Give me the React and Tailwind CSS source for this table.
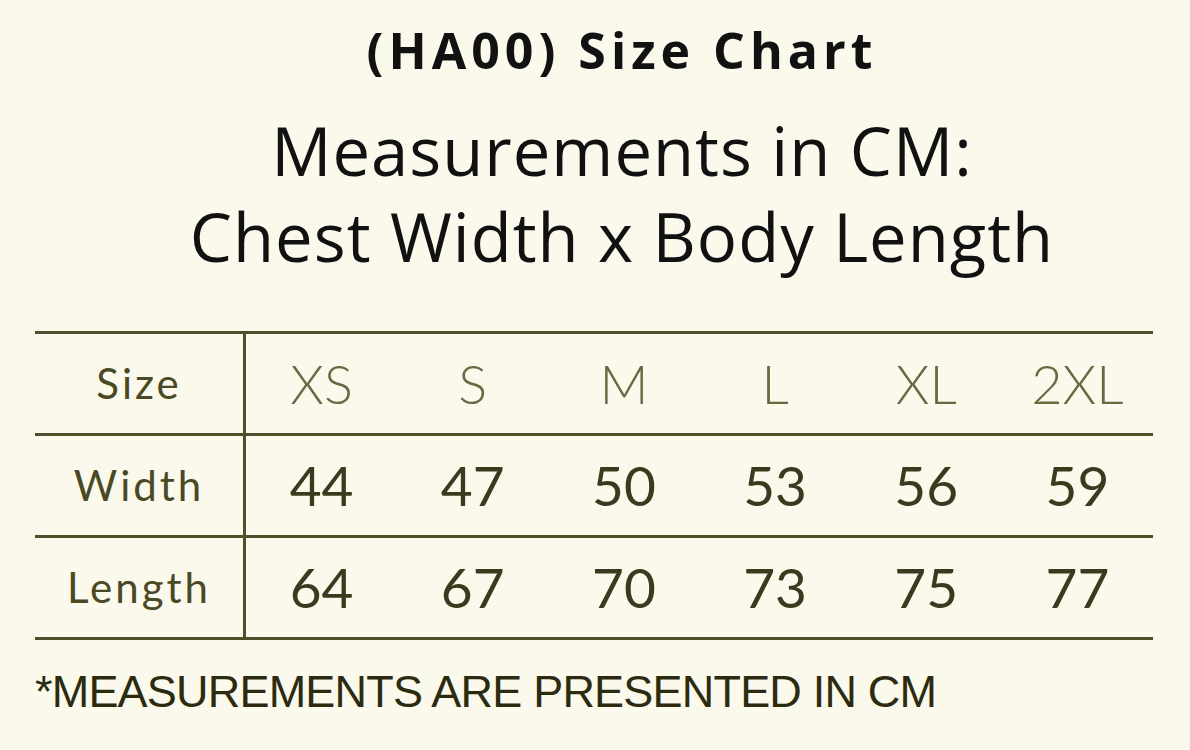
import React from "react";

// Size chart data
const sizes = ["XS", "S", "M", "L", "XL", "2XL"];
const rows = [
  { label: "Width", values: [44, 47, 50, 53, 56, 59] },
  { label: "Length", values: [64, 67, 70, 73, 75, 77] },
];

function Cell({ children, className = "" }) {
  return (
    <div className={`flex items-center justify-center ${className}`}>
      {children}
    </div>
  );
}

export default function App() {
  return (
    <div className="w-[1190px] h-[750px] overflow-hidden bg-[#fbf9ec] flex flex-col">
      {/* Headings */}
      <div className="flex flex-col items-center pl-[54px] pt-[19px] font-['Open_Sans',sans-serif] text-[#111]">
        <h1 className="text-[50px] leading-[62px] font-bold tracking-[5px]">(HA00) Size Chart</h1>
        <p className="mt-[26px] text-[67px] leading-[86px] tracking-[1px]">Measurements in CM:</p>
        <p className="text-[67px] leading-[86px] tracking-[1px]">Chest Width x Body Length</p>
      </div>

      {/* Table */}
      <div className="mx-[35px] mt-[52px] w-[1118px] border-y-[3px] border-[#4f4f2a] font-['Lato',sans-serif]">
        <div className="flex h-[99px]">
          <Cell className="w-[211px] border-r-[3px] border-[#4f4f2a] text-[42px] tracking-[3px] text-[#4a4924]">
            Size
          </Cell>
          {sizes.map((s) => (
            <Cell key={s} className="flex-1 text-[54px] font-light text-[#6a6944]">
              {s}
            </Cell>
          ))}
        </div>
        {rows.map((row) => (
          <div key={row.label} className="flex h-[102px] border-t-[3px] border-[#4f4f2a]">
            <Cell className="w-[211px] border-r-[3px] border-[#4f4f2a] text-[42px] tracking-[3px] text-[#4a4924]">
              {row.label}
            </Cell>
            {row.values.map((v, i) => (
              <Cell key={i} className="flex-1 text-[55px] text-[#3b3a1e]">
                {v}
              </Cell>
            ))}
          </div>
        ))}
      </div>

      {/* Footnote */}
      <p className="ml-[35px] mt-[29px] font-['Liberation_Sans',sans-serif] text-[45px] leading-none tracking-[-0.8px] text-[#2c2b10]">
        *MEASUREMENTS ARE PRESENTED IN CM
      </p>
    </div>
  );
}
